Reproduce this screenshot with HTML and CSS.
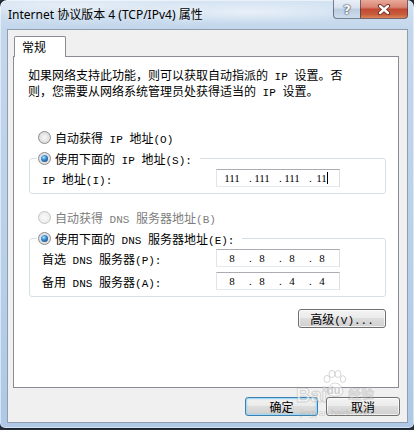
FILE: index.html
```html
<!DOCTYPE html>
<html lang="zh-CN">
<head>
<meta charset="utf-8">
<title>Internet 协议版本 4 (TCP/IPv4) 属性</title>
<link rel="stylesheet" href="styles.css">
</head>
<body>
<div class="window">
  <div class="titlebar">
    <span class="title">Internet 协议版本 4 (TCP/IPv4) 属性</span>
    <div class="caption">
      <button class="cap help" type="button">?</button>
      <button class="cap close" type="button" aria-label="关闭">
        <svg width="14" height="11" viewBox="0 0 14 11">
          <path d="M3 2 L11 9 M11 2 L3 9" stroke="#6b2a1c" stroke-width="4.2" stroke-linecap="round" fill="none"/>
          <path d="M3 2 L11 9 M11 2 L3 9" stroke="#ffffff" stroke-width="2.4" stroke-linecap="round" fill="none"/>
        </svg>
      </button>
    </div>
  </div>

  <div class="client">
    <div class="tabstrip">
      <div class="tab">常规</div>
    </div>

    <div class="panel">
      <p class="desc">如果网络支持此功能，则可以获取自动指派的<span class="lat"> IP </span>设置。否则，您需要从网络系统管理员处获得适当的<span class="lat"> IP </span>设置。</p>

      <div class="opt first">
        <span class="radio"></span>
        <span>自动获得<span class="lat"> IP </span>地址<span class="lat">(O)</span></span>
      </div>

      <fieldset class="group">
        <legend class="opt">
          <span class="radio on"></span>
          <span>使用下面的<span class="lat"> IP </span>地址<span class="lat">(S):</span></span>
        </legend>
        <div class="field">
          <label><span class="lat">IP </span>地址<span class="lat">(I):</span></label>
          <div class="ipbox">
            <span class="oct">111</span><span class="dot">.</span>
            <span class="oct">111</span><span class="dot">.</span>
            <span class="oct">111</span><span class="dot">.</span>
            <span class="oct"><span class="caret">11</span></span>
          </div>
        </div>
      </fieldset>

      <div class="opt second disabled">
        <span class="radio"></span>
        <span>自动获得<span class="lat"> DNS </span>服务器地址<span class="lat">(B)</span></span>
      </div>

      <fieldset class="group">
        <legend class="opt">
          <span class="radio on"></span>
          <span>使用下面的<span class="lat"> DNS </span>服务器地址<span class="lat">(E):</span></span>
        </legend>
        <div class="field">
          <label>首选<span class="lat"> DNS </span>服务器<span class="lat">(P):</span></label>
          <div class="ipbox">
            <span class="oct">8</span><span class="dot">.</span>
            <span class="oct">8</span><span class="dot">.</span>
            <span class="oct">8</span><span class="dot">.</span>
            <span class="oct">8</span>
          </div>
        </div>
        <div class="field">
          <label>备用<span class="lat"> DNS </span>服务器<span class="lat">(A):</span></label>
          <div class="ipbox">
            <span class="oct">8</span><span class="dot">.</span>
            <span class="oct">8</span><span class="dot">.</span>
            <span class="oct">4</span><span class="dot">.</span>
            <span class="oct">4</span>
          </div>
        </div>
      </fieldset>

      <div class="adv-row">
        <button class="btn adv" type="button">高级<span class="lat">(V)...</span></button>
      </div>
    </div>

    <div class="actions">
      <button class="btn default" type="button">确定</button>
      <button class="btn cancel" type="button">取消</button>
    </div>
  </div>

  <div class="watermark" aria-hidden="true">
    <span class="wm-bai">Bai</span>
    <svg class="wm-paw" width="24" height="28" viewBox="0 0 24 28">
      <ellipse cx="5" cy="9" rx="3" ry="3.6" />
      <ellipse cx="10" cy="4" rx="3" ry="3.6" />
      <ellipse cx="16" cy="4" rx="3" ry="3.6" />
      <ellipse cx="21" cy="9" rx="2.6" ry="3.4" />
      <path d="M6 24 C3 20 8 13 13 13 C18 13 23 20 20 24 C18 27 8 27 6 24 Z" />
    </svg>
    <span class="wm-du">du</span>
    <span class="wm-jy">经验</span>
    <span class="wm-url">jingyan.baidu.com</span>
  </div>
</div>
</body>
</html>
```
FILE: styles.css
```css
html, body {
  margin: 0;
  height: 100%;
}

body {
  background: #26303a;
  font: 12px "Noto Sans CJK SC", sans-serif;
  color: #000;
  overflow: hidden;
}

/* half-width latin runs inside the dialog text */
.lat {
  font-family: "Liberation Mono", monospace;
  font-size: 11px;
}

/* ---------- window frame ---------- */
.window {
  position: relative;
  width: 414px;
  height: 428px;
  box-sizing: border-box;
  padding: 0 6px 5px 7px;
  display: flex;
  flex-direction: column;
  border-radius: 7px 7px 5px 5px;
  background:
    radial-gradient(ellipse 130px 12px at 250px 12px, rgba(255, 255, 255, .55), transparent),
    radial-gradient(ellipse 150px 10px at 70px 6px, rgba(255, 255, 255, .45), transparent),
    linear-gradient(180deg, #d4e3f2 0, #c3d7ec 28px, #b9d0e9 60%, #aec8e5 100%);
  box-shadow: inset 0 0 0 1px rgba(255, 255, 255, .5), 0 0 0 1px rgba(20, 30, 40, .7);
}

.titlebar {
  flex: none;
  height: 29px;
  display: flex;
  align-items: flex-start;
  justify-content: space-between;
}

.title {
  padding: 6px 0 0 1px;
  font: 12px/18px "Noto Sans", "Noto Sans CJK SC", sans-serif;
  text-shadow: 0 0 8px rgba(255, 255, 255, .9);
}

.caption {
  display: flex;
  height: 19px;
}

.cap {
  margin: 0;
  padding: 0;
  height: 19px;
  box-sizing: border-box;
  border: 1px solid rgba(45, 55, 75, .6);
  border-top: none;
  display: flex;
  align-items: center;
  justify-content: center;
}

.help {
  width: 27px;
  border-right: none;
  border-radius: 0 0 0 4px;
  background: linear-gradient(180deg, #e9eff7 0, #d7e2ee 45%, #bccde0 50%, #cddcec 100%);
  color: #fff;
  font: bold 13px "DejaVu Sans", sans-serif;
  text-shadow: 0 0 1px #3b4a5e, 0 0 1px #3b4a5e, 0 0 2px #3b4a5e;
}

.close {
  width: 48px;
  border-radius: 0 0 4px 0;
  background: linear-gradient(180deg, #e8a899 0, #d98474 40%, #c24a33 52%, #c85c3c 80%, #dc8458 100%);
}

/* ---------- client area ---------- */
.client {
  flex: 1;
  display: flex;
  flex-direction: column;
  background: #f0f0f0;
  border: 1px solid #8f9eaf;
}

.tabstrip {
  display: flex;
  padding: 6px 0 0 6px;
}

.tab {
  position: relative;
  z-index: 1;
  width: 52px;
  height: 21px;
  box-sizing: border-box;
  margin-bottom: -1px;
  padding-left: 7px;
  border: 1px solid #898c95;
  border-bottom: none;
  border-radius: 2px 2px 0 0;
  background: #fff;
  line-height: 19px;
}

.panel {
  height: 332px;
  box-sizing: border-box;
  margin: 0 8px 0 5px;
  padding: 11px 12px 0 14px;
  border: 1px solid #898c95;
  background: #fff;
}

.desc {
  margin: 0;
  width: 318px;
  line-height: 13px;
}

/* radio option rows */
.opt {
  display: flex;
  align-items: center;
  gap: 4px;
  height: 16px;
  padding-left: 10px;
}

.opt.first { margin-top: 29px; }
.opt.second { margin-top: 15px; }
.opt.disabled { color: #7d7d7d; }

.radio {
  position: relative;
  flex: none;
  width: 13px;
  height: 13px;
  box-sizing: border-box;
  border-radius: 50%;
  border: 1px solid #8a8c8e;
  background: radial-gradient(circle at 50% 50%, #f6f6f6 0, #e4e4e4 55%, #cdcdcd 100%);
}

.radio.on::after {
  content: "";
  position: absolute;
  inset: 2px;
  border-radius: 50%;
  background: radial-gradient(circle at 40% 35%, #bfe6fc 0, #3f93d8 35%, #17497f 85%);
}

.disabled .radio {
  border-color: #c2c4c6;
  background: radial-gradient(circle at 50% 50%, #fafafa 0, #eeeeee 60%, #e2e2e2 100%);
}

/* group boxes */
.group {
  margin: 5px 0 0 1px;
  padding: 2px 0 5px;
  min-width: 0;
  border: 1px solid #d5dfe5;
  border-radius: 3px;
}

.group legend {
  margin-left: 7px;
  padding: 0 8px 0 1px;
}

.field {
  display: flex;
  align-items: center;
  height: 20px;
  padding-left: 12px;
}

.field + .field { margin-top: 3px; }

.field label {
  width: 174px;
  flex: none;
}

.ipbox {
  display: flex;
  align-items: center;
  width: 124px;
  height: 18px;
  box-sizing: border-box;
  padding-left: 3px;
  border: 1px solid;
  border-color: #abadb3 #dbdfe6 #e3e9ef #e2e3ea;
  background: #fff;
  font: 11px/12px "Liberation Serif", serif;
  white-space: nowrap;
}

.oct {
  width: 24px;
  flex: none;
  text-align: center;
}

.dot {
  width: 6px;
  flex: none;
  box-sizing: border-box;
  padding-left: 5px;
}

.caret { border-right: 1px solid #000; }

/* push buttons */
.btn {
  height: 19px;
  box-sizing: border-box;
  margin: 0;
  padding: 0;
  border: 1px solid #707070;
  border-radius: 3px;
  background: linear-gradient(180deg, #f3f3f3 0, #ebebeb 45%, #dddddd 50%, #cfcfcf 100%);
  box-shadow: inset 0 0 0 1px rgba(255, 255, 255, .7);
  font: 12px/17px "Noto Sans CJK SC", sans-serif;
  color: #000;
}

.adv-row {
  display: flex;
  justify-content: flex-end;
  margin-top: 12px;
}

.btn.adv { width: 88px; }

.actions {
  display: flex;
  justify-content: flex-end;
  gap: 8px;
  margin-top: 9px;
  padding-right: 7px;
}

.btn.default {
  width: 73px;
  border-color: #3c7fb1;
  box-shadow: inset 0 0 0 1px #9fd9f5, inset 0 0 2px 1px rgba(120, 200, 240, .5);
}

.btn.cancel { width: 74px; }

/* faint site watermark over the lower right corner */
.watermark {
  position: absolute;
  left: 292px;
  top: 366px;
  width: 100px;
  height: 56px;
  pointer-events: none;
  color: rgba(255, 255, 255, .55);
}

.watermark > * { position: absolute; }

.wm-bai {
  left: 4px;
  top: 18px;
  font: bold 20px/22px "Liberation Sans", sans-serif;
  -webkit-text-stroke: 1px rgba(140, 140, 140, .35);
}

.wm-paw {
  left: 30px;
  top: 4px;
  fill: rgba(255, 255, 255, .5);
  stroke: rgba(140, 140, 140, .35);
  stroke-width: 1;
}

.wm-du {
  left: 35px;
  top: 18px;
  font: bold 11px/12px "Liberation Sans", sans-serif;
  color: rgba(150, 150, 150, .45);
}

.wm-jy {
  left: 56px;
  top: 20px;
  font: 13px/14px "Noto Sans CJK SC", sans-serif;
  -webkit-text-stroke: 1px rgba(140, 140, 140, .3);
}

.wm-url {
  left: 8px;
  top: 42px;
  font: 9px/10px "Liberation Sans", sans-serif;
  color: rgba(150, 150, 150, .35);
}
```
